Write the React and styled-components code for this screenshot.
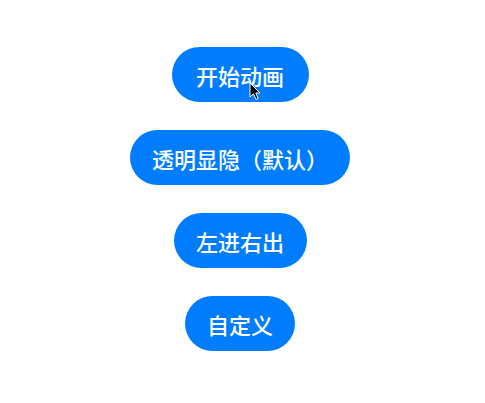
import React from 'react';
import styled, { createGlobalStyle } from 'styled-components';

const GlobalStyle = createGlobalStyle`
  html, body {
    margin: 0;
    padding: 0;
    background: #ffffff;
  }
  body {
    font-family: "Noto Sans CJK SC", "Noto Sans", sans-serif;
  }
`;

const buttons = [
  { label: '开始动画', width: 137 },
  { label: '透明显隐（默认）', width: 220 },
  { label: '左进右出', width: 133 },
  { label: '自定义', width: 110 },
];

function App() {
  return (
    <>
      <GlobalStyle />
      <Page>
        <Column>
          {buttons.map((b, i) => (
            <PillButton key={b.label} $width={b.width}>
              {b.label}
              {i === 0 && (
                <Cursor viewBox="0 0 12 19" width="12" height="19">
                  <path
                    d="M1 1 L1 15 L4.5 11.8 L7 17.5 L9.2 16.5 L6.8 11 L11 11 Z"
                    fill="#000"
                    stroke="#fff"
                    strokeWidth="1"
                    strokeLinejoin="round"
                  />
                </Cursor>
              )}
            </PillButton>
          ))}
        </Column>
      </Page>
    </>
  );
}

export default App;

const Page = styled.div`
  width: 485px;
  height: 403px;
  display: flex;
  justify-content: center;
  padding: 47px 5px 0 0;
  box-sizing: border-box;
`;

const Column = styled.div`
  display: flex;
  flex-direction: column;
  align-items: center;
  gap: 28px;
`;

const PillButton = styled.div`
  position: relative;
  width: ${(p) => p.$width}px;
  height: 55px;
  border-radius: 28px;
  background: #007dff;
  color: #ffffff;
  font-size: 22px;
  font-weight: 500;
  display: flex;
  align-items: center;
  justify-content: center;
  line-height: 1;
`;

const Cursor = styled.svg`
  position: absolute;
  left: 77px;
  top: 35px;
`;
